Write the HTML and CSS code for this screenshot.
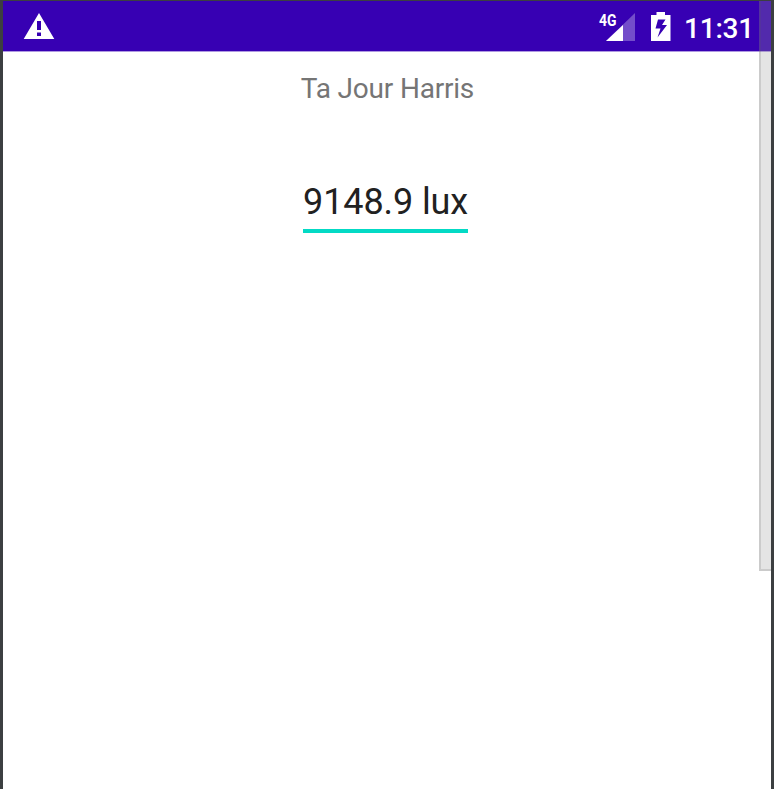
FILE: index.html
```html
<!DOCTYPE html>
<html lang="en">
<head>
<meta charset="utf-8">
<title>Light sensor</title>
<link rel="stylesheet" href="styles.css">
</head>
<body>
<div class="screen">
  <header class="status-bar">
    <svg class="warning" width="32" height="28" viewBox="0 0 32 28"><path fill="#fff" fill-rule="evenodd" d="M16 1 31.300 27H.7ZM14 9v9h4V9ZM14 20.500v3.500h4v-3.500Z"/></svg>
    <div class="status-right">
      <svg class="signal" width="39" height="30" viewBox="-2 0 39 30"><path fill="#fff" fill-opacity=".3" d="M36 1v28H7Z"/><path fill="#fff" d="M24 13v16H7Z"/><path class="notch" d="M0 0h19.500v15H0Z"/><text class="network" x="0" y="13.500" textLength="17.500" lengthAdjust="spacingAndGlyphs">4G</text></svg>
      <svg class="battery" width="20" height="30" viewBox="0 0 20 30"><path fill="#fff" fill-rule="evenodd" d="M5.500 0h8.500v3H19.500v26H0V3h5.500ZM7 7.500 4.500 16.500h5L6.500 25.500l9.500-12.500h-5L14.500 7.500Z"/></svg>
      <span class="clock">11:31</span>
    </div>
  </header>
  <main class="content">
    <div class="name">Ta Jour Harris</div>
    <div class="reading">9148.9 lux</div>
  </main>
  <div class="scrollbar"></div>
</div>
</body>
</html>
```
FILE: styles.css
```css
* { box-sizing: border-box; }
body { margin: 0; background: #3c3f41; font-family: Roboto, sans-serif; }
.screen {
  position: relative;
  height: 789px;
  border: solid #3c3f41;
  border-width: 1px 3px 0;
  background: #fff;
}
.status-bar {
  display: flex;
  justify-content: space-between;
  height: 51px;
  padding: 11px 18px 0 20px;
  background: #3700b3;
  border-bottom: 1px solid #af99e1;
  color: #fff;
}
.status-right { display: flex; }
.signal { margin-right: 15px; overflow: visible; }
.notch { fill: #3700b3; }
.network { fill: #fff; font-size: 16px; font-weight: 700; }
.battery { margin-right: 13px; }
.clock { width: 69px; font-size: 28px; line-height: 34px; font-weight: 500; letter-spacing: -.2px; white-space: nowrap; }
.content { display: flex; flex-direction: column; align-items: center; }
.name { margin: 20px 0 0 1px; font-size: 28px; line-height: 34px; letter-spacing: -.2px; color: #757575; }
.reading {
  width: 165px;
  margin: 74px 3px 0 0;
  height: 53px;
  border-bottom: 4px solid #03dac5;
  font-size: 36px;
  line-height: 45px;
  letter-spacing: -.1px;
  color: #212121;
  white-space: nowrap;
}
.scrollbar {
  position: absolute;
  top: 0;
  right: 0;
  width: 12px;
  height: 570px;
  background: rgba(155, 155, 155, .27);
  border: solid rgba(90, 90, 90, .18);
  border-width: 0 0 2px 2px;
}
```
